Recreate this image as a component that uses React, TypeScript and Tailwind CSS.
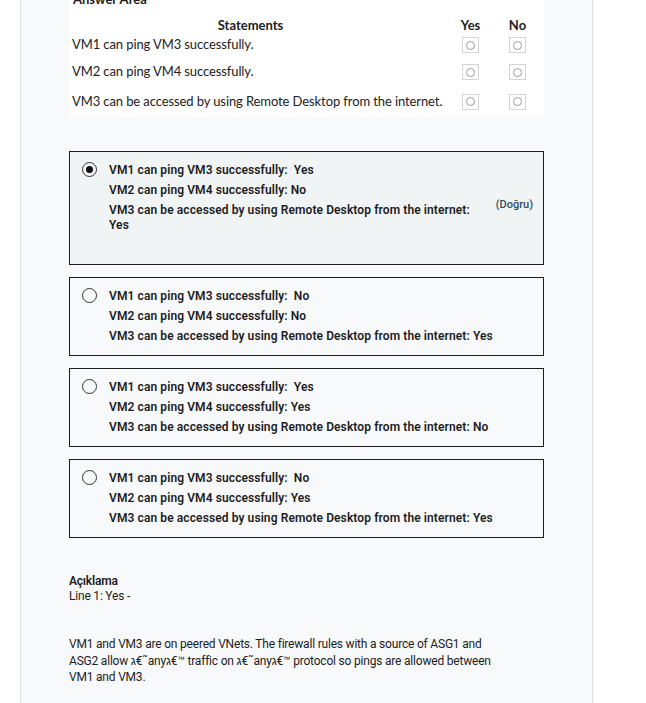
import React from "react";

const statements = [
  "VM1 can ping VM3 successfully.",
  "VM2 can ping VM4 successfully.",
  "VM3 can be accessed by using Remote Desktop from the internet.",
];

const rowHeights = ["h-[24px]", "h-[30px]", "h-[29px]"];

const options = [
  { a: "Yes", b: "No", c: "Yes", selected: true },
  { a: "No", b: "No", c: "Yes" },
  { a: "Yes", b: "Yes", c: "No" },
  { a: "No", b: "Yes", c: "Yes" },
];

function SquareRadio() {
  return (
    <div className="mx-auto flex h-[16px] w-[17px] items-center justify-center border border-[#d4d4d4] bg-white">
      <div className="h-[9px] w-[9px] rounded-full border border-[#9a9a9a]" />
    </div>
  );
}

function AnswerArea() {
  return (
    <div
      className="w-[475px] bg-white pb-[1px] text-[13px] text-[#222]"
      style={{ fontFamily: 'Lato, "Noto Sans", sans-serif' }}
    >
      <div className="-mt-[9px] pl-[4px] font-bold leading-[16px]">Answer Area</div>
      <div className="grid grid-cols-[1fr_48px_48px] items-center pl-[3px] pr-[1px]">
        <div className="pt-[10px] pr-[18px] text-center font-bold leading-[16px]">Statements</div>
        <div className="-ml-[1px] pt-[10px] text-center font-bold leading-[16px]">Yes</div>
        <div className="-ml-[3px] pt-[10px] text-center font-bold leading-[16px]">No</div>
        {statements.map((s, i) => (
          <React.Fragment key={s}>
            <div className={`${rowHeights[i]} flex items-center whitespace-nowrap tracking-[-0.1px]`}>{s}</div>
            <div className={`${rowHeights[i]} -ml-[2px] flex items-center`}><SquareRadio /></div>
            <div className={`${rowHeights[i]} -ml-[4px] flex items-center`}><SquareRadio /></div>
          </React.Fragment>
        ))}
      </div>
    </div>
  );
}

function Radio({ checked }: { checked?: boolean }) {
  return (
    <div className="mt-[2px] flex h-[15px] w-[15px] shrink-0 items-center justify-center rounded-full border-[1.5px] border-[#333]">
      {checked && <div className="h-[7px] w-[7px] rounded-full bg-[#111]" />}
    </div>
  );
}

function Option({ a, b, c, selected }: { a: string; b: string; c: string; selected?: boolean }) {
  return (
    <div
      className={`flex border border-[#1c1d1f] pl-[12px] pr-[10px] ${
        selected ? "h-[114px] bg-[#f1f4f4] pt-[8px]" : "h-[79px] bg-[#f8f9fa] pt-[8px]"
      }`}
    >
      <Radio checked={selected} />
      <div
        className={`ml-[12px] flex-1 text-[12px] font-semibold leading-[20px] tracking-[0.1px] text-[#1c1d1f] ${
          selected ? "pr-[12px]" : ""
        }`}
      >
        <div>VM1 can ping VM3 successfully:&nbsp; {a}</div>
        <div>VM2 can ping VM4 successfully: {b}</div>
        <div className={selected ? "pt-[3px] leading-[15px]" : ""}>
          VM3 can be accessed by using Remote Desktop from the internet: {c}
        </div>
      </div>
      {selected && (
        <div className="pt-[37px] text-[11px] font-medium text-[#2d4d5b]">(Doğru)</div>
      )}
    </div>
  );
}

export default function App() {
  return (
    <div className="min-h-screen overflow-hidden bg-white" style={{ fontFamily: "Roboto, sans-serif" }}>
      <div className="ml-[20px] min-h-[712px] w-[573px] border-x border-[#dfe1e5] bg-[#f8f9fa] pl-[48px] shadow-[1px_0_2px_rgba(0,0,0,0.06)]">
        <AnswerArea />
        <div className="mt-[34px] flex w-[475px] flex-col gap-[12px]">
          {options.map((o, i) => (
            <Option key={i} {...o} />
          ))}
        </div>
        <div className="mt-[36px] text-[12px] leading-[15px] tracking-[-0.2px] text-[#1c1d1f]">
          <div className="font-semibold">Açıklama</div>
          <div>Line 1: Yes -</div>
          <div className="mt-[32px] w-[430px] leading-[16.5px]">
            VM1 and VM3 are on peered VNets. The firewall rules with a source of ASG1 and ASG2 allow
            ג€˜anyג€™ traffic on ג€˜anyג€™ protocol so pings are allowed between VM1 and VM3.
          </div>
        </div>
      </div>
    </div>
  );
}
